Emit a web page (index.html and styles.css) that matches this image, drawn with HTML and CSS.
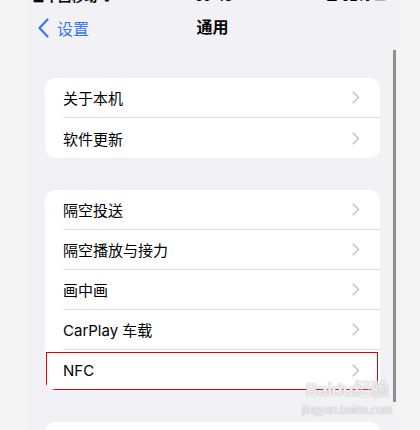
FILE: index.html
```html
<!DOCTYPE html>
<html lang="zh-CN">
<head>
    <meta charset="UTF-8">
    <meta name="viewport" content="width=device-width, initial-scale=1.0">
    <title>通用</title>
    <link rel="stylesheet" href="styles.css">
</head>
<body>
    <div class="screen">
        <div class="status">
            <div class="status-inner">
                <span class="carrier"><span class="bars">▮▮▮</span> 中国移动 ᯤ</span>
                <span class="time">09:43</span>
                <span class="battery">◔ ■ 62% ▭</span>
            </div>
        </div>

        <div class="nav">
            <div class="back">
                <svg width="12" height="20" viewBox="0 0 12 20"><path d="M10.5 1.5L2.5 10l8 8.5" fill="none" stroke="#3478f6" stroke-width="2.2" stroke-linecap="round" stroke-linejoin="round"/></svg>
                <span>设置</span>
            </div>
            <div class="title">通用</div>
        </div>

        <div class="group">
            <div class="row"><div class="row-body"><span>关于本机</span><svg class="chev" width="8" height="13" viewBox="0 0 8 13"><path d="M1.2 1.2l5.3 5.3-5.3 5.3" fill="none" stroke="#c4c4c7" stroke-width="1.6" stroke-linecap="round" stroke-linejoin="round"/></svg></div></div>
            <div class="row"><div class="row-body"><span>软件更新</span><svg class="chev" width="8" height="13" viewBox="0 0 8 13"><path d="M1.2 1.2l5.3 5.3-5.3 5.3" fill="none" stroke="#c4c4c7" stroke-width="1.6" stroke-linecap="round" stroke-linejoin="round"/></svg></div></div>
        </div>

        <div class="group">
            <div class="row"><div class="row-body"><span>隔空投送</span><svg class="chev" width="8" height="13" viewBox="0 0 8 13"><path d="M1.2 1.2l5.3 5.3-5.3 5.3" fill="none" stroke="#c4c4c7" stroke-width="1.6" stroke-linecap="round" stroke-linejoin="round"/></svg></div></div>
            <div class="row"><div class="row-body"><span>隔空播放与接力</span><svg class="chev" width="8" height="13" viewBox="0 0 8 13"><path d="M1.2 1.2l5.3 5.3-5.3 5.3" fill="none" stroke="#c4c4c7" stroke-width="1.6" stroke-linecap="round" stroke-linejoin="round"/></svg></div></div>
            <div class="row"><div class="row-body"><span>画中画</span><svg class="chev" width="8" height="13" viewBox="0 0 8 13"><path d="M1.2 1.2l5.3 5.3-5.3 5.3" fill="none" stroke="#c4c4c7" stroke-width="1.6" stroke-linecap="round" stroke-linejoin="round"/></svg></div></div>
            <div class="row"><div class="row-body"><span>CarPlay 车载</span><svg class="chev" width="8" height="13" viewBox="0 0 8 13"><path d="M1.2 1.2l5.3 5.3-5.3 5.3" fill="none" stroke="#c4c4c7" stroke-width="1.6" stroke-linecap="round" stroke-linejoin="round"/></svg></div></div>
            <div class="row marked"><div class="row-body"><span>NFC</span><svg class="chev" width="8" height="13" viewBox="0 0 8 13"><path d="M1.2 1.2l5.3 5.3-5.3 5.3" fill="none" stroke="#c4c4c7" stroke-width="1.6" stroke-linecap="round" stroke-linejoin="round"/></svg></div></div>
        </div>

        <div class="group">
            <div class="row"><div class="row-body"><span>后台App刷新</span></div></div>
        </div>

        <div class="scrollbar"></div>

        <div class="watermark">
            <div class="wm-logo">Baidu经验</div>
            <div class="wm-url">jingyan.baidu.com</div>
        </div>
    </div>
</body>
</html>
```

FILE: styles.css
```css
body {
    margin: 0;
    background-color: #f4f4f5;
    font-family: Inter, "Noto Sans CJK SC", sans-serif;
    color: #000;
}

.screen {
    position: relative;
    margin-left: 27px;
    width: 369px;
    height: 430px;
    overflow: hidden;
    background-color: #f1f1f6;
}

/* barre d'état coupée en haut */
.status {
    height: 4px;
    overflow: hidden;
}

.status-inner {
    display: flex;
    justify-content: space-between;
    margin-top: -11px;
    padding: 0 10px 0 6px;
    font-size: 13px;
    line-height: 14px;
    font-weight: 600;
}

.bars {
    font-size: 9px;
    letter-spacing: -2px;
}

.nav {
    position: relative;
    display: flex;
    align-items: center;
    justify-content: center;
    height: 44px;
}

.back {
    position: absolute;
    left: 10px;
    top: 12px;
    display: flex;
    align-items: center;
    gap: 8px;
    color: #3478f6;
    font-size: 16px;
}

.title {
    font-size: 16px;
    font-weight: 600;
    margin-left: 2px;
}

.group {
    margin: 30px 16px 32px 18px;
    background-color: #fff;
    border-radius: 10px;
    overflow: hidden;
}

.group + .group {
    margin-top: 0;
}

.row {
    position: relative;
    display: flex;
    height: 40px;
    padding-left: 18px;
    font-size: 15px;
}

.row-body {
    flex: 1;
    display: flex;
    align-items: center;
    justify-content: space-between;
    padding-right: 20px;
    border-bottom: 1px solid #dcdcdf;
}

.row:last-child .row-body {
    border-bottom: none;
}

.marked::after {
    content: "";
    position: absolute;
    top: 2px;
    left: 1px;
    right: 2px;
    bottom: 0;
    border: 1px solid #e3000b;
}

.scrollbar {
    position: absolute;
    left: 366px;
    top: 50px;
    width: 3px;
    height: 352px;
    background-color: #8f8f91;
}

.watermark {
    position: absolute;
    left: 274px;
    top: 377px;
    width: 92px;
    text-align: center;
    white-space: nowrap;
    color: rgba(255, 255, 255, 0.75);
    text-shadow: 0 0 1px #b8b8b8, 0 0 1px #b8b8b8;
}

.wm-logo {
    font-size: 18px;
    font-weight: 700;
    line-height: 26px;
    letter-spacing: -0.5px;
}

.wm-url {
    font-size: 11px;
    line-height: 14px;
    letter-spacing: -0.3px;
}
```
